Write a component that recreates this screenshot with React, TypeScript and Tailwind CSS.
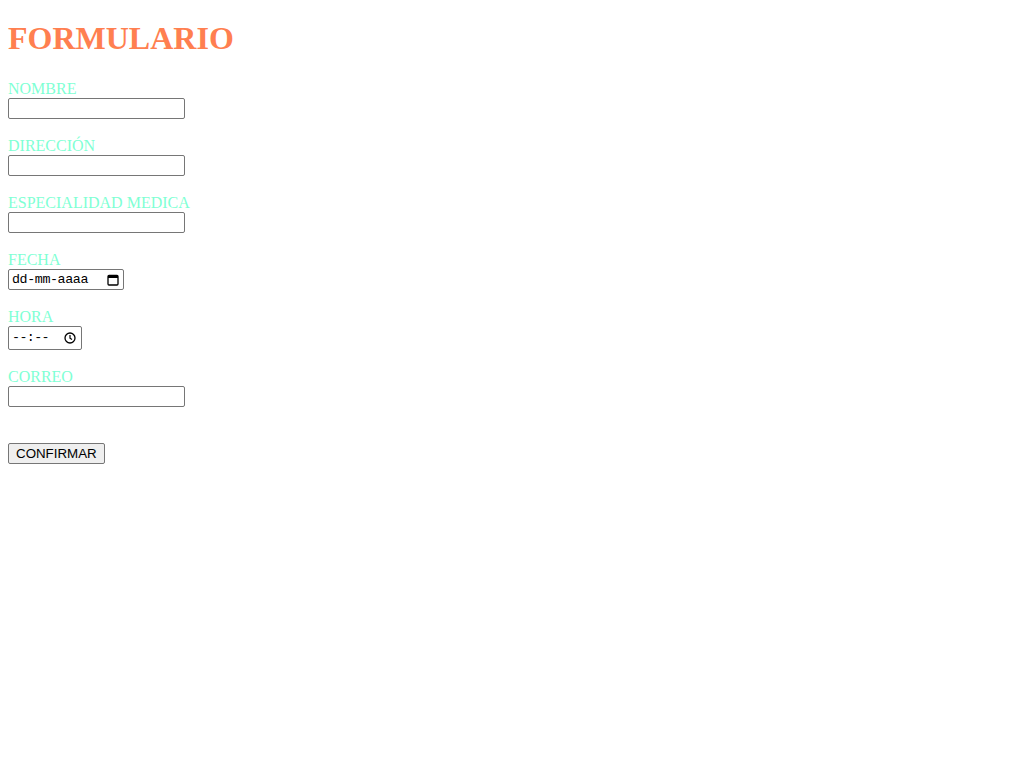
import React from 'react';

const labelCls = "block text-[16px] leading-[18px] text-[#7fffd4] font-['Liberation_Serif',serif]";
const inputCls =
  "block h-[21px] w-[177px] rounded-[2px] border border-[#767676] bg-white px-[2px] text-[13.33px] font-['Liberation_Sans',Arial,sans-serif] text-black";

const Field: React.FC<{ label: string; children: React.ReactNode }> = ({ label, children }) => (
  <div className="mb-[18px]">
    <label className={labelCls}>{label}</label>
    {children}
  </div>
);

const App: React.FC = () => {
  return (
    <div className="min-h-screen bg-white px-2 font-['Liberation_Serif',serif]">
      <h1 className="mt-[20px] mb-[23px] text-[32px] leading-[37px] font-bold text-[#ff7f50]">FORMULARIO</h1>
      <form onSubmit={(e) => e.preventDefault()}>
        <Field label="NOMBRE">
          <input type="text" className={inputCls} />
        </Field>
        <Field label="DIRECCIÓN">
          <input type="text" className={inputCls} />
        </Field>
        <Field label="ESPECIALIDAD MEDICA">
          <input type="text" className={inputCls} />
        </Field>
        <Field label="FECHA">
          <div className="flex h-[21px] w-[116px] items-center justify-between rounded-[2px] border border-[#767676] bg-white pl-[3px] pr-[4px] text-[13.33px] font-['Liberation_Mono','DejaVu_Sans_Mono',monospace] text-black">
            <span className="tracking-[-0.4px]">dd-mm-aaaa</span>
            <svg width="12" height="12" viewBox="0 0 12 12">
              <rect x="1" y="1.5" width="10" height="9.5" rx="1" fill="none" stroke="#000" strokeWidth="1.3" />
              <rect x="1" y="1.5" width="10" height="2.5" fill="#000" />
            </svg>
          </div>
        </Field>
        <Field label="HORA">
          <div className="flex h-[24px] w-[74px] items-center justify-between rounded-[2px] border border-[#767676] bg-white pl-[3px] pr-[5px] text-[13.33px] font-['Liberation_Mono','DejaVu_Sans_Mono',monospace] text-black">
            <span className="tracking-[-0.6px]">--:--</span>
            <svg width="12" height="12" viewBox="0 0 12 12">
              <circle cx="6" cy="6" r="5" fill="none" stroke="#000" strokeWidth="1.3" />
              <path d="M6 3v3.2l2 1.3" fill="none" stroke="#000" strokeWidth="1.2" />
            </svg>
          </div>
        </Field>
        <div>
          <label className={labelCls}>CORREO</label>
          <input type="email" className={inputCls} />
        </div>
        <button
          type="submit"
          className="mt-[36px] h-[21px] rounded-[2px] border border-[#767676] bg-[#efefef] px-[7px] text-[13.33px] leading-[15px] font-['Liberation_Sans',Arial,sans-serif] text-black"
        >
          CONFIRMAR
        </button>
      </form>
    </div>
  );
};

export default App;
